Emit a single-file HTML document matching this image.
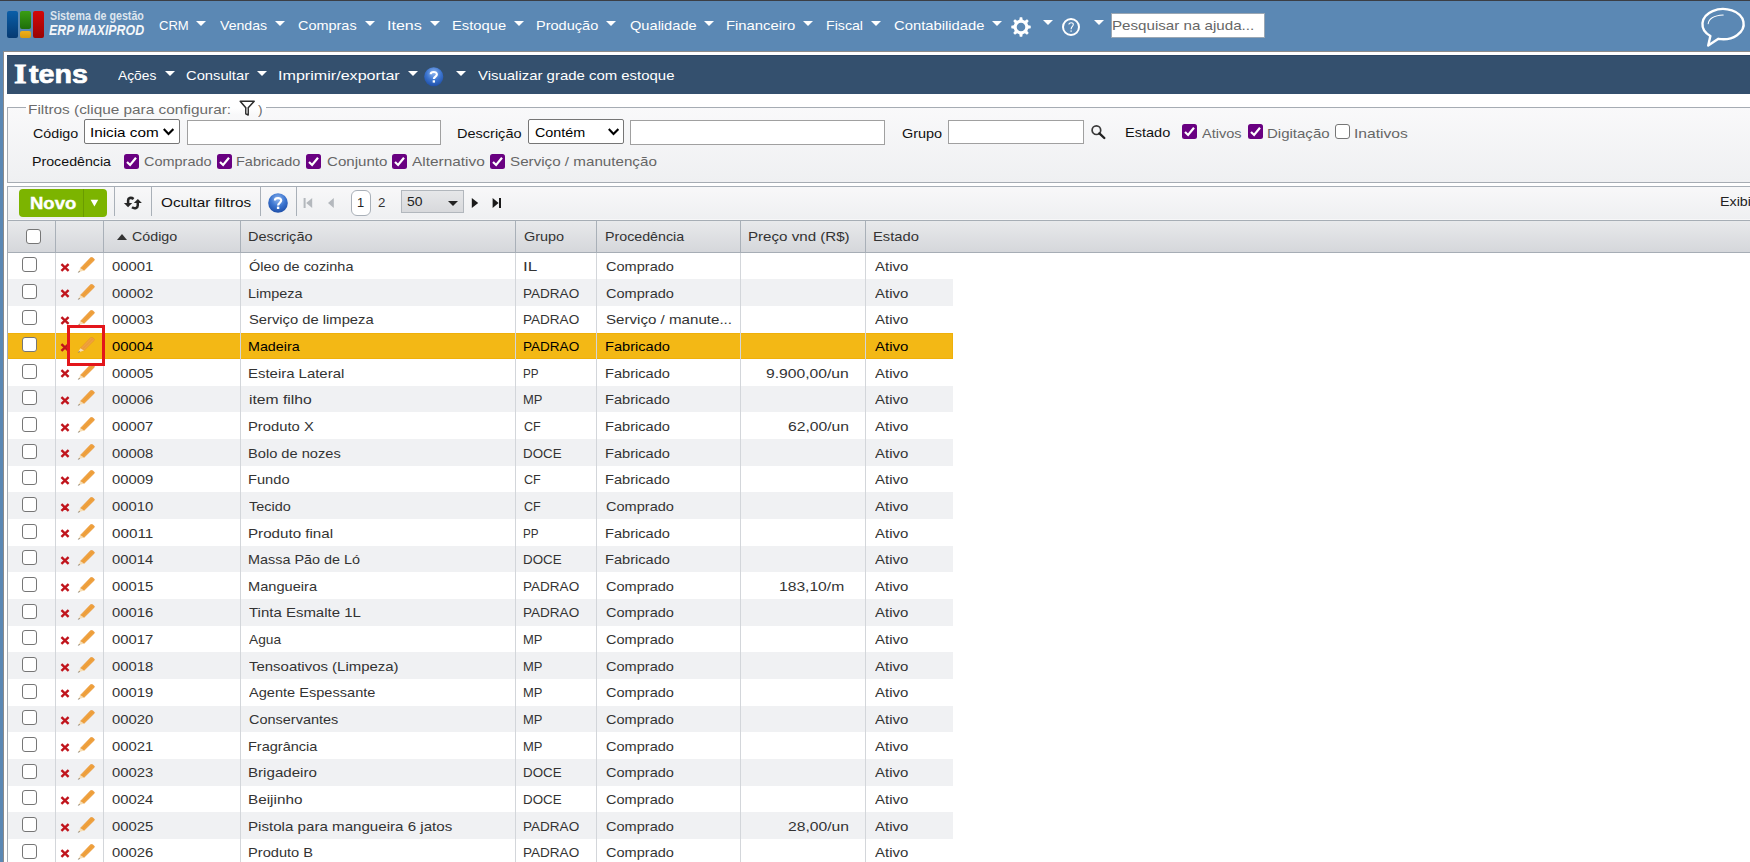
<!DOCTYPE html>
<html><head><meta charset="utf-8"><title>Itens</title>
<style>
html,body{margin:0;padding:0}
body{width:1750px;height:862px;overflow:hidden;position:relative;background:#fff;font-family:"Liberation Sans",sans-serif}
.t{position:absolute;white-space:nowrap;font-family:"Liberation Sans",sans-serif;transform-origin:0 0}
</style></head><body>
<div style="position:absolute;left:0px;top:0px;width:1750px;height:1px;background:#3b3e44"></div><div style="position:absolute;left:0px;top:1px;width:1750px;height:861px;background:#5b88b4"></div><div style="position:absolute;left:3px;top:51px;width:1747px;height:811px;background:#fff;border-left:1px solid #8b8b8b;border-top:1px solid #8b8b8b;box-sizing:border-box"></div><div style="position:absolute;left:7px;top:55px;width:1743px;height:39px;background:#34506e;border-top:1px solid #2b4563;box-sizing:border-box"></div><div style="position:absolute;left:7px;top:11px;width:11px;height:27px;border-radius:2px;background:linear-gradient(#0a5ea8,#063a72)"></div><div style="position:absolute;left:20px;top:11px;width:11px;height:17.5px;border-radius:2px;background:linear-gradient(#3a9e14,#1e6e0a)"></div><div style="position:absolute;left:20px;top:30.5px;width:11px;height:7.5px;border-radius:2px;background:linear-gradient(#f2b01a,#d89a10)"></div><div style="position:absolute;left:33px;top:11px;width:10.5px;height:27px;border-radius:2px;background:linear-gradient(#d40808,#980404)"></div><div style="position:absolute;left:196px;top:20.5px;width:0;height:0;border-left:5.0px solid transparent;border-right:5.0px solid transparent;border-top:5.5px solid #fff"></div><div style="position:absolute;left:275px;top:20.5px;width:0;height:0;border-left:5.0px solid transparent;border-right:5.0px solid transparent;border-top:5.5px solid #fff"></div><div style="position:absolute;left:364.5px;top:20.5px;width:0;height:0;border-left:5.0px solid transparent;border-right:5.0px solid transparent;border-top:5.5px solid #fff"></div><div style="position:absolute;left:429.8px;top:20.5px;width:0;height:0;border-left:5.0px solid transparent;border-right:5.0px solid transparent;border-top:5.5px solid #fff"></div><div style="position:absolute;left:514px;top:20.5px;width:0;height:0;border-left:5.0px solid transparent;border-right:5.0px solid transparent;border-top:5.5px solid #fff"></div><div style="position:absolute;left:606px;top:20.5px;width:0;height:0;border-left:5.0px solid transparent;border-right:5.0px solid transparent;border-top:5.5px solid #fff"></div><div style="position:absolute;left:703.8px;top:20.5px;width:0;height:0;border-left:5.0px solid transparent;border-right:5.0px solid transparent;border-top:5.5px solid #fff"></div><div style="position:absolute;left:803.2px;top:20.5px;width:0;height:0;border-left:5.0px solid transparent;border-right:5.0px solid transparent;border-top:5.5px solid #fff"></div><div style="position:absolute;left:871.2px;top:20.5px;width:0;height:0;border-left:5.0px solid transparent;border-right:5.0px solid transparent;border-top:5.5px solid #fff"></div><div style="position:absolute;left:992px;top:20.5px;width:0;height:0;border-left:5.0px solid transparent;border-right:5.0px solid transparent;border-top:5.5px solid #fff"></div><div style="position:absolute;left:1042.9px;top:20.3px;width:0;height:0;border-left:5.0px solid transparent;border-right:5.0px solid transparent;border-top:5.5px solid #fff"></div><div style="position:absolute;left:1094px;top:20.3px;width:0;height:0;border-left:5.0px solid transparent;border-right:5.0px solid transparent;border-top:5.5px solid #fff"></div><svg style="position:absolute;left:1010px;top:17px" width="22" height="21" viewBox="0 0 22 21"><path fill="#fff" fill-rule="evenodd" d="M9.33,2.79 L9.77,0.28 L12.23,0.28 L12.67,2.79 L14.92,3.72 L17.01,2.26 L18.74,3.99 L17.28,6.08 L18.21,8.33 L20.72,8.77 L20.72,11.23 L18.21,11.67 L17.28,13.92 L18.74,16.01 L17.01,17.74 L14.92,16.28 L12.67,17.21 L12.23,19.72 L9.77,19.72 L9.33,17.21 L7.08,16.28 L4.99,17.74 L3.26,16.01 L4.72,13.92 L3.79,11.67 L1.28,11.23 L1.28,8.77 L3.79,8.33 L4.72,6.08 L3.26,3.99 L4.99,2.26 L7.08,3.72Z M11,5.7 A4.3,4.3 0 1 0 11,14.3 A4.3,4.3 0 1 0 11,5.7Z"/></svg><svg style="position:absolute;left:1061px;top:17px" width="21" height="20" viewBox="0 0 21 20"><circle cx="10" cy="10" r="8" fill="none" stroke="#fff" stroke-width="2"/><path d="M7.9,7.4 C7.9,5.3 12.3,5.2 12.3,7.6 C12.3,9.4 10.1,9.5 10.1,12.2" fill="none" stroke="#fff" stroke-width="1.1"/><rect x="9.5" y="13.4" width="1.2" height="1.4" fill="#fff"/></svg><div style="position:absolute;left:1111px;top:13px;width:154px;height:25px;background:#fff;border:1px solid #9aa7b4;box-sizing:border-box"></div><svg style="position:absolute;left:1698px;top:5px" width="50" height="44" viewBox="0 0 50 44"><path d="M20.42,33.81 A20.6,15.1 0 1 0 12.37,31.00 L10.2,40.6 Z" fill="none" stroke="#fff" stroke-width="2.4" stroke-linejoin="round"/><path d="M10.2,18.8 C10.8,13.8 16,10.6 25.2,10" fill="none" stroke="#fff" stroke-width="1.1" stroke-linecap="round"/></svg><div style="position:absolute;left:165px;top:70.5px;width:0;height:0;border-left:5.0px solid transparent;border-right:5.0px solid transparent;border-top:5.5px solid #fff"></div><div style="position:absolute;left:257.2px;top:70.5px;width:0;height:0;border-left:5.0px solid transparent;border-right:5.0px solid transparent;border-top:5.5px solid #fff"></div><div style="position:absolute;left:407.7px;top:70.5px;width:0;height:0;border-left:5.0px solid transparent;border-right:5.0px solid transparent;border-top:5.5px solid #fff"></div><div style="position:absolute;left:455.8px;top:70.5px;width:0;height:0;border-left:5.0px solid transparent;border-right:5.0px solid transparent;border-top:5.5px solid #fff"></div><svg style="position:absolute;left:424px;top:67px" width="19.5" height="19.5" viewBox="0 0 20 20"><defs><radialGradient id="hg424" cx="50%" cy="30%" r="70%"><stop offset="0" stop-color="#8fb6ef"/><stop offset="0.55" stop-color="#3b74cf"/><stop offset="1" stop-color="#1f4fa8"/></radialGradient></defs><circle cx="10" cy="10" r="9.8" fill="url(#hg424)"/><path d="M6.9,7.4 C6.9,4.4 13.2,4.2 13.2,7.6 C13.2,9.8 10.1,9.9 10.1,12.4" fill="none" stroke="#fff" stroke-width="2.2"/><rect x="8.9" y="13.6" width="2.4" height="2.4" fill="#fff"/></svg><div style="position:absolute;left:7px;top:107px;width:1743px;height:76px;box-sizing:border-box;border:1px solid #a6acb3;border-right:none;background:linear-gradient(#f9f9fa,#eff0f2)"></div><div style="position:absolute;left:26px;top:106px;width:240px;height:3px;background:#fff"></div><div style="position:absolute;left:26px;top:108px;width:239px;height:6px;background:linear-gradient(#fff,#f9f9fa)"></div><svg style="position:absolute;left:238px;top:99px" width="18" height="18" viewBox="0 0 18 18"><path d="M2.2,2.2 L16.2,2.2 L10.2,8.8 L10.2,16 L7.8,14.8 L7.8,8.8 Z" fill="#fff" stroke="#2b2b2b" stroke-width="1.5" stroke-linejoin="round"/><rect x="8.6" y="9.6" width="0.9" height="4.8" fill="#bbb"/></svg><div style="position:absolute;left:84px;top:119px;width:96px;height:25px;background:#fff;border:1px solid #767676;border-radius:2px;box-sizing:border-box"></div><svg style="position:absolute;left:163.2px;top:128px" width="11" height="8" viewBox="0 0 11 8"><path d="M0.8,1.1 L5.5,6 L10.4,1.1" fill="none" stroke="#000" stroke-width="2.1"/></svg><div style="position:absolute;left:187px;top:120px;width:254px;height:25px;background:#fff;border:1px solid #a0a0a0;box-sizing:border-box"></div><div style="position:absolute;left:528px;top:119px;width:96px;height:25px;background:#fff;border:1px solid #767676;border-radius:2px;box-sizing:border-box"></div><svg style="position:absolute;left:607.6px;top:128px" width="11" height="8" viewBox="0 0 11 8"><path d="M0.8,1.1 L5.5,6 L10.4,1.1" fill="none" stroke="#000" stroke-width="2.1"/></svg><div style="position:absolute;left:630px;top:120px;width:255px;height:25px;background:#fff;border:1px solid #a0a0a0;box-sizing:border-box"></div><div style="position:absolute;left:948px;top:120px;width:136px;height:24px;background:#fff;border:1px solid #a0a0a0;box-sizing:border-box"></div><svg style="position:absolute;left:1089px;top:123px" width="18" height="18" viewBox="0 0 18 18"><circle cx="7.4" cy="7.2" r="4.3" fill="none" stroke="#3a3a3a" stroke-width="1.7"/><path d="M10.4,10.4 L15.3,15" stroke="#222" stroke-width="2.4" stroke-linecap="round"/></svg><svg style="position:absolute;left:1182px;top:124px" width="15" height="15" viewBox="0 0 15 15"><rect x="0" y="0" width="15" height="15" rx="2.5" fill="#690081"/><path d="M3,8 L6.1,11 L12,3.8" fill="none" stroke="#fff" stroke-width="2.2"/></svg><svg style="position:absolute;left:1247.7px;top:124px" width="15" height="15" viewBox="0 0 15 15"><rect x="0" y="0" width="15" height="15" rx="2.5" fill="#690081"/><path d="M3,8 L6.1,11 L12,3.8" fill="none" stroke="#fff" stroke-width="2.2"/></svg><div style="position:absolute;left:1334.6px;top:124px;width:15px;height:15px;box-sizing:border-box;border:1px solid #767676;border-radius:3px;background:#fff"></div><svg style="position:absolute;left:123.8px;top:153.8px" width="15" height="15" viewBox="0 0 15 15"><rect x="0" y="0" width="15" height="15" rx="2.5" fill="#690081"/><path d="M3,8 L6.1,11 L12,3.8" fill="none" stroke="#fff" stroke-width="2.2"/></svg><svg style="position:absolute;left:217px;top:153.8px" width="15" height="15" viewBox="0 0 15 15"><rect x="0" y="0" width="15" height="15" rx="2.5" fill="#690081"/><path d="M3,8 L6.1,11 L12,3.8" fill="none" stroke="#fff" stroke-width="2.2"/></svg><svg style="position:absolute;left:306px;top:153.8px" width="15" height="15" viewBox="0 0 15 15"><rect x="0" y="0" width="15" height="15" rx="2.5" fill="#690081"/><path d="M3,8 L6.1,11 L12,3.8" fill="none" stroke="#fff" stroke-width="2.2"/></svg><svg style="position:absolute;left:391.9px;top:153.8px" width="15" height="15" viewBox="0 0 15 15"><rect x="0" y="0" width="15" height="15" rx="2.5" fill="#690081"/><path d="M3,8 L6.1,11 L12,3.8" fill="none" stroke="#fff" stroke-width="2.2"/></svg><svg style="position:absolute;left:490px;top:153.8px" width="15" height="15" viewBox="0 0 15 15"><rect x="0" y="0" width="15" height="15" rx="2.5" fill="#690081"/><path d="M3,8 L6.1,11 L12,3.8" fill="none" stroke="#fff" stroke-width="2.2"/></svg><div style="position:absolute;left:7px;top:186px;width:1743px;height:35px;box-sizing:border-box;border-top:1px solid #a8afb7;border-left:1px solid #a8afb7;background:linear-gradient(#f8f8f9,#eeeff1)"></div><div style="position:absolute;left:8px;top:219px;width:1742px;height:1px;background:#f7f7f8"></div><div style="position:absolute;left:19px;top:189px;width:88px;height:27.5px;background:#7cb400;border-radius:4px"></div><div style="position:absolute;left:82.5px;top:189px;width:1px;height:27.5px;background:#6a9c00"></div><svg style="position:absolute;left:90px;top:199px" width="9" height="9" viewBox="0 0 9 9"><path d="M0.6,0.8 L8.2,0.8 L4.4,7.6Z" fill="#fff"/></svg><div style="position:absolute;left:114px;top:187px;width:1.2px;height:29px;background:#a9b0b8"></div><div style="position:absolute;left:151px;top:187px;width:1.2px;height:29px;background:#a9b0b8"></div><div style="position:absolute;left:260px;top:187px;width:1.2px;height:29px;background:#a9b0b8"></div><div style="position:absolute;left:296px;top:187px;width:1.2px;height:29px;background:#a9b0b8"></div><svg style="position:absolute;left:122px;top:195px" width="22" height="16" viewBox="0 0 22 16"><path d="M11.6,3.9 C10.2,2.8 8.6,2.8 7.7,3 C6.7,3.3 6.1,4.1 6.1,5.3 L6.1,9" fill="none" stroke="#262626" stroke-width="2.5"/><path d="M1.9,8 L10.2,8 L6.05,12.3Z" fill="#262626"/><path d="M10,12.3 C11.4,13.3 13,13.3 14,13 C15.1,12.6 15.75,11.7 15.75,10.5 L15.75,7" fill="none" stroke="#262626" stroke-width="2.5"/><path d="M11.8,8 L19.9,8 L15.85,3.9Z" fill="#262626"/></svg><svg style="position:absolute;left:268px;top:193px" width="20" height="20" viewBox="0 0 20 20"><defs><radialGradient id="hg268" cx="50%" cy="30%" r="70%"><stop offset="0" stop-color="#8fb6ef"/><stop offset="0.55" stop-color="#3b74cf"/><stop offset="1" stop-color="#1f4fa8"/></radialGradient></defs><circle cx="10" cy="10" r="9.8" fill="url(#hg268)"/><path d="M6.9,7.4 C6.9,4.4 13.2,4.2 13.2,7.6 C13.2,9.8 10.1,9.9 10.1,12.4" fill="none" stroke="#fff" stroke-width="2.2"/><rect x="8.9" y="13.6" width="2.4" height="2.4" fill="#fff"/></svg><svg style="position:absolute;left:300px;top:196px" width="210" height="14" viewBox="0 0 210 14"><rect x="3.6" y="2" width="2" height="10" fill="#b4b8bd"/><path d="M12.2,2 L6.2,7 L12.2,12Z" fill="#b4b8bd"/><path d="M33.8,2 L28,7 L33.8,12Z" fill="#b4b8bd"/><path d="M171.8,2 L178.2,7 L171.8,12Z" fill="#1a1a1a"/><path d="M192.6,2 L198.6,7 L192.6,12Z" fill="#1a1a1a"/><rect x="199" y="2" width="2" height="10" fill="#1a1a1a"/></svg><div style="position:absolute;left:351px;top:189.5px;width:20px;height:26px;background:#fff;border:1px solid #a9b0b8;border-radius:6px;box-sizing:border-box"></div><div style="position:absolute;left:401px;top:189.5px;width:63px;height:23px;background:linear-gradient(#e6e7e9,#d8d9dc);border:1px solid #b2b7bd;box-sizing:border-box"></div><div style="position:absolute;left:448px;top:201px;width:0;height:0;border-left:5.0px solid transparent;border-right:5.0px solid transparent;border-top:5px solid #222"></div><div style="position:absolute;left:7px;top:220px;width:1743px;height:33px;box-sizing:border-box;border-top:1px solid #a6adb5;border-bottom:1px solid #a6adb5;border-left:1px solid #a6adb5;background:linear-gradient(#e8e9eb,#d5d7db)"></div><div style="position:absolute;left:55px;top:221px;width:1px;height:31px;background:#a9b0b8"></div><div style="position:absolute;left:103px;top:221px;width:1px;height:31px;background:#a9b0b8"></div><div style="position:absolute;left:240px;top:221px;width:1px;height:31px;background:#a9b0b8"></div><div style="position:absolute;left:515px;top:221px;width:1px;height:31px;background:#a9b0b8"></div><div style="position:absolute;left:596px;top:221px;width:1px;height:31px;background:#a9b0b8"></div><div style="position:absolute;left:740px;top:221px;width:1px;height:31px;background:#a9b0b8"></div><div style="position:absolute;left:865px;top:221px;width:1px;height:31px;background:#a9b0b8"></div><div style="position:absolute;left:26.4px;top:229px;width:14.5px;height:14.5px;box-sizing:border-box;border:1px solid #767676;border-radius:3px;background:#fff"></div><div style="position:absolute;left:116.8px;top:234.2px;width:0;height:0;border-left:5.2px solid transparent;border-right:5.2px solid transparent;border-bottom:6px solid #333"></div><div style="position:absolute;left:7px;top:252px;width:1px;height:610px;background:#a6adb5"></div><div style="position:absolute;left:8px;top:278.99966666666666px;width:945px;height:26.666666666666668px;background:#f0f1f3"></div><div style="position:absolute;left:8px;top:333px;width:945px;height:26px;background:#f3b815;border:1px solid #efb00a;border-left:none;box-sizing:border-box"></div><div style="position:absolute;left:8px;top:385.66633333333334px;width:945px;height:26.666666666666668px;background:#f0f1f3"></div><div style="position:absolute;left:8px;top:438.9996666666667px;width:945px;height:26.666666666666668px;background:#f0f1f3"></div><div style="position:absolute;left:8px;top:492.33299999999997px;width:945px;height:26.666666666666668px;background:#f0f1f3"></div><div style="position:absolute;left:8px;top:545.6663333333333px;width:945px;height:26.666666666666668px;background:#f0f1f3"></div><div style="position:absolute;left:8px;top:598.9996666666667px;width:945px;height:26.666666666666668px;background:#f0f1f3"></div><div style="position:absolute;left:8px;top:652.333px;width:945px;height:26.666666666666668px;background:#f0f1f3"></div><div style="position:absolute;left:8px;top:705.6663333333333px;width:945px;height:26.666666666666668px;background:#f0f1f3"></div><div style="position:absolute;left:8px;top:758.9996666666667px;width:945px;height:26.666666666666668px;background:#f0f1f3"></div><div style="position:absolute;left:8px;top:812.333px;width:945px;height:26.666666666666668px;background:#f0f1f3"></div><div style="position:absolute;left:55px;top:252.5px;width:1px;height:610px;background:#d3d6da"></div><div style="position:absolute;left:103px;top:252.5px;width:1px;height:610px;background:#d3d6da"></div><div style="position:absolute;left:240px;top:252.5px;width:1px;height:610px;background:#d3d6da"></div><div style="position:absolute;left:515px;top:252.5px;width:1px;height:610px;background:#d3d6da"></div><div style="position:absolute;left:596px;top:252.5px;width:1px;height:610px;background:#d3d6da"></div><div style="position:absolute;left:740px;top:252.5px;width:1px;height:610px;background:#d3d6da"></div><div style="position:absolute;left:865px;top:252.5px;width:1px;height:610px;background:#d3d6da"></div><div style="position:absolute;left:22.4px;top:257.033px;width:15px;height:15px;box-sizing:border-box;border:1px solid #767676;border-radius:3px;background:#fff"></div><svg style="position:absolute;left:60px;top:262.633px" width="10" height="9" viewBox="0 0 10 9"><path d="M1.4,1.2 L8.6,7.8 M8.6,1.2 L1.4,7.8" stroke="#c0141c" stroke-width="2.4"/></svg><svg style="position:absolute;left:76.5px;top:257.133px" width="19" height="17" viewBox="0 0 19 17"><path d="M13.9,0.3 C14.8,-0.2 16.5,1 17.3,2.2 C17.6,2.7 17.4,3.2 17.1,3.5 L7.0,13.5 L3.4,11.2 Z" fill="#f0a23e" stroke="#e38d2c" stroke-width="0.5"/><path d="M5.2,12.3 L15.6,1.9" stroke="#e08a2a" stroke-width="0.6" opacity="0.6"/><path d="M3.4,11.2 L7.0,13.5 L0.9,15.4 Z" fill="#f7ddb2"/><path d="M0.7,15.6 L2.2,14.3 L2.9,15.0 Z" fill="#3a3a3a"/></svg><div style="position:absolute;left:22.4px;top:283.69966666666664px;width:15px;height:15px;box-sizing:border-box;border:1px solid #767676;border-radius:3px;background:#fff"></div><svg style="position:absolute;left:60px;top:289.29966666666667px" width="10" height="9" viewBox="0 0 10 9"><path d="M1.4,1.2 L8.6,7.8 M8.6,1.2 L1.4,7.8" stroke="#c0141c" stroke-width="2.4"/></svg><svg style="position:absolute;left:76.5px;top:283.79966666666667px" width="19" height="17" viewBox="0 0 19 17"><path d="M13.9,0.3 C14.8,-0.2 16.5,1 17.3,2.2 C17.6,2.7 17.4,3.2 17.1,3.5 L7.0,13.5 L3.4,11.2 Z" fill="#f0a23e" stroke="#e38d2c" stroke-width="0.5"/><path d="M5.2,12.3 L15.6,1.9" stroke="#e08a2a" stroke-width="0.6" opacity="0.6"/><path d="M3.4,11.2 L7.0,13.5 L0.9,15.4 Z" fill="#f7ddb2"/><path d="M0.7,15.6 L2.2,14.3 L2.9,15.0 Z" fill="#3a3a3a"/></svg><div style="position:absolute;left:22.4px;top:310.36633333333333px;width:15px;height:15px;box-sizing:border-box;border:1px solid #767676;border-radius:3px;background:#fff"></div><svg style="position:absolute;left:60px;top:315.96633333333335px" width="10" height="9" viewBox="0 0 10 9"><path d="M1.4,1.2 L8.6,7.8 M8.6,1.2 L1.4,7.8" stroke="#c0141c" stroke-width="2.4"/></svg><svg style="position:absolute;left:76.5px;top:310.46633333333335px" width="19" height="17" viewBox="0 0 19 17"><path d="M13.9,0.3 C14.8,-0.2 16.5,1 17.3,2.2 C17.6,2.7 17.4,3.2 17.1,3.5 L7.0,13.5 L3.4,11.2 Z" fill="#f0a23e" stroke="#e38d2c" stroke-width="0.5"/><path d="M5.2,12.3 L15.6,1.9" stroke="#e08a2a" stroke-width="0.6" opacity="0.6"/><path d="M3.4,11.2 L7.0,13.5 L0.9,15.4 Z" fill="#f7ddb2"/><path d="M0.7,15.6 L2.2,14.3 L2.9,15.0 Z" fill="#3a3a3a"/></svg><div style="position:absolute;left:22.4px;top:337.03299999999996px;width:15px;height:15px;box-sizing:border-box;border:1px solid #767676;border-radius:3px;background:#fff"></div><svg style="position:absolute;left:60px;top:342.633px" width="10" height="9" viewBox="0 0 10 9"><path d="M1.4,1.2 L8.6,7.8 M8.6,1.2 L1.4,7.8" stroke="#c0141c" stroke-width="2.4"/></svg><svg style="position:absolute;left:76.5px;top:337.133px" width="19" height="17" viewBox="0 0 19 17"><path d="M13.9,0.3 C14.8,-0.2 16.5,1 17.3,2.2 C17.6,2.7 17.4,3.2 17.1,3.5 L7.0,13.5 L3.4,11.2 Z" fill="#f0a23e" stroke="#e38d2c" stroke-width="0.5"/><path d="M5.2,12.3 L15.6,1.9" stroke="#e08a2a" stroke-width="0.6" opacity="0.6"/><path d="M3.4,11.2 L7.0,13.5 L0.9,15.4 Z" fill="#f7ddb2"/><path d="M0.7,15.6 L2.2,14.3 L2.9,15.0 Z" fill="#3a3a3a"/></svg><div style="position:absolute;left:22.4px;top:363.69966666666664px;width:15px;height:15px;box-sizing:border-box;border:1px solid #767676;border-radius:3px;background:#fff"></div><svg style="position:absolute;left:60px;top:369.29966666666667px" width="10" height="9" viewBox="0 0 10 9"><path d="M1.4,1.2 L8.6,7.8 M8.6,1.2 L1.4,7.8" stroke="#c0141c" stroke-width="2.4"/></svg><svg style="position:absolute;left:76.5px;top:363.79966666666667px" width="19" height="17" viewBox="0 0 19 17"><path d="M13.9,0.3 C14.8,-0.2 16.5,1 17.3,2.2 C17.6,2.7 17.4,3.2 17.1,3.5 L7.0,13.5 L3.4,11.2 Z" fill="#f0a23e" stroke="#e38d2c" stroke-width="0.5"/><path d="M5.2,12.3 L15.6,1.9" stroke="#e08a2a" stroke-width="0.6" opacity="0.6"/><path d="M3.4,11.2 L7.0,13.5 L0.9,15.4 Z" fill="#f7ddb2"/><path d="M0.7,15.6 L2.2,14.3 L2.9,15.0 Z" fill="#3a3a3a"/></svg><div style="position:absolute;left:22.4px;top:390.36633333333333px;width:15px;height:15px;box-sizing:border-box;border:1px solid #767676;border-radius:3px;background:#fff"></div><svg style="position:absolute;left:60px;top:395.96633333333335px" width="10" height="9" viewBox="0 0 10 9"><path d="M1.4,1.2 L8.6,7.8 M8.6,1.2 L1.4,7.8" stroke="#c0141c" stroke-width="2.4"/></svg><svg style="position:absolute;left:76.5px;top:390.46633333333335px" width="19" height="17" viewBox="0 0 19 17"><path d="M13.9,0.3 C14.8,-0.2 16.5,1 17.3,2.2 C17.6,2.7 17.4,3.2 17.1,3.5 L7.0,13.5 L3.4,11.2 Z" fill="#f0a23e" stroke="#e38d2c" stroke-width="0.5"/><path d="M5.2,12.3 L15.6,1.9" stroke="#e08a2a" stroke-width="0.6" opacity="0.6"/><path d="M3.4,11.2 L7.0,13.5 L0.9,15.4 Z" fill="#f7ddb2"/><path d="M0.7,15.6 L2.2,14.3 L2.9,15.0 Z" fill="#3a3a3a"/></svg><div style="position:absolute;left:22.4px;top:417.03299999999996px;width:15px;height:15px;box-sizing:border-box;border:1px solid #767676;border-radius:3px;background:#fff"></div><svg style="position:absolute;left:60px;top:422.633px" width="10" height="9" viewBox="0 0 10 9"><path d="M1.4,1.2 L8.6,7.8 M8.6,1.2 L1.4,7.8" stroke="#c0141c" stroke-width="2.4"/></svg><svg style="position:absolute;left:76.5px;top:417.133px" width="19" height="17" viewBox="0 0 19 17"><path d="M13.9,0.3 C14.8,-0.2 16.5,1 17.3,2.2 C17.6,2.7 17.4,3.2 17.1,3.5 L7.0,13.5 L3.4,11.2 Z" fill="#f0a23e" stroke="#e38d2c" stroke-width="0.5"/><path d="M5.2,12.3 L15.6,1.9" stroke="#e08a2a" stroke-width="0.6" opacity="0.6"/><path d="M3.4,11.2 L7.0,13.5 L0.9,15.4 Z" fill="#f7ddb2"/><path d="M0.7,15.6 L2.2,14.3 L2.9,15.0 Z" fill="#3a3a3a"/></svg><div style="position:absolute;left:22.4px;top:443.6996666666667px;width:15px;height:15px;box-sizing:border-box;border:1px solid #767676;border-radius:3px;background:#fff"></div><svg style="position:absolute;left:60px;top:449.2996666666667px" width="10" height="9" viewBox="0 0 10 9"><path d="M1.4,1.2 L8.6,7.8 M8.6,1.2 L1.4,7.8" stroke="#c0141c" stroke-width="2.4"/></svg><svg style="position:absolute;left:76.5px;top:443.7996666666667px" width="19" height="17" viewBox="0 0 19 17"><path d="M13.9,0.3 C14.8,-0.2 16.5,1 17.3,2.2 C17.6,2.7 17.4,3.2 17.1,3.5 L7.0,13.5 L3.4,11.2 Z" fill="#f0a23e" stroke="#e38d2c" stroke-width="0.5"/><path d="M5.2,12.3 L15.6,1.9" stroke="#e08a2a" stroke-width="0.6" opacity="0.6"/><path d="M3.4,11.2 L7.0,13.5 L0.9,15.4 Z" fill="#f7ddb2"/><path d="M0.7,15.6 L2.2,14.3 L2.9,15.0 Z" fill="#3a3a3a"/></svg><div style="position:absolute;left:22.4px;top:470.36633333333333px;width:15px;height:15px;box-sizing:border-box;border:1px solid #767676;border-radius:3px;background:#fff"></div><svg style="position:absolute;left:60px;top:475.96633333333335px" width="10" height="9" viewBox="0 0 10 9"><path d="M1.4,1.2 L8.6,7.8 M8.6,1.2 L1.4,7.8" stroke="#c0141c" stroke-width="2.4"/></svg><svg style="position:absolute;left:76.5px;top:470.46633333333335px" width="19" height="17" viewBox="0 0 19 17"><path d="M13.9,0.3 C14.8,-0.2 16.5,1 17.3,2.2 C17.6,2.7 17.4,3.2 17.1,3.5 L7.0,13.5 L3.4,11.2 Z" fill="#f0a23e" stroke="#e38d2c" stroke-width="0.5"/><path d="M5.2,12.3 L15.6,1.9" stroke="#e08a2a" stroke-width="0.6" opacity="0.6"/><path d="M3.4,11.2 L7.0,13.5 L0.9,15.4 Z" fill="#f7ddb2"/><path d="M0.7,15.6 L2.2,14.3 L2.9,15.0 Z" fill="#3a3a3a"/></svg><div style="position:absolute;left:22.4px;top:497.03299999999996px;width:15px;height:15px;box-sizing:border-box;border:1px solid #767676;border-radius:3px;background:#fff"></div><svg style="position:absolute;left:60px;top:502.633px" width="10" height="9" viewBox="0 0 10 9"><path d="M1.4,1.2 L8.6,7.8 M8.6,1.2 L1.4,7.8" stroke="#c0141c" stroke-width="2.4"/></svg><svg style="position:absolute;left:76.5px;top:497.133px" width="19" height="17" viewBox="0 0 19 17"><path d="M13.9,0.3 C14.8,-0.2 16.5,1 17.3,2.2 C17.6,2.7 17.4,3.2 17.1,3.5 L7.0,13.5 L3.4,11.2 Z" fill="#f0a23e" stroke="#e38d2c" stroke-width="0.5"/><path d="M5.2,12.3 L15.6,1.9" stroke="#e08a2a" stroke-width="0.6" opacity="0.6"/><path d="M3.4,11.2 L7.0,13.5 L0.9,15.4 Z" fill="#f7ddb2"/><path d="M0.7,15.6 L2.2,14.3 L2.9,15.0 Z" fill="#3a3a3a"/></svg><div style="position:absolute;left:22.4px;top:523.6996666666668px;width:15px;height:15px;box-sizing:border-box;border:1px solid #767676;border-radius:3px;background:#fff"></div><svg style="position:absolute;left:60px;top:529.2996666666667px" width="10" height="9" viewBox="0 0 10 9"><path d="M1.4,1.2 L8.6,7.8 M8.6,1.2 L1.4,7.8" stroke="#c0141c" stroke-width="2.4"/></svg><svg style="position:absolute;left:76.5px;top:523.7996666666667px" width="19" height="17" viewBox="0 0 19 17"><path d="M13.9,0.3 C14.8,-0.2 16.5,1 17.3,2.2 C17.6,2.7 17.4,3.2 17.1,3.5 L7.0,13.5 L3.4,11.2 Z" fill="#f0a23e" stroke="#e38d2c" stroke-width="0.5"/><path d="M5.2,12.3 L15.6,1.9" stroke="#e08a2a" stroke-width="0.6" opacity="0.6"/><path d="M3.4,11.2 L7.0,13.5 L0.9,15.4 Z" fill="#f7ddb2"/><path d="M0.7,15.6 L2.2,14.3 L2.9,15.0 Z" fill="#3a3a3a"/></svg><div style="position:absolute;left:22.4px;top:550.3663333333334px;width:15px;height:15px;box-sizing:border-box;border:1px solid #767676;border-radius:3px;background:#fff"></div><svg style="position:absolute;left:60px;top:555.9663333333333px" width="10" height="9" viewBox="0 0 10 9"><path d="M1.4,1.2 L8.6,7.8 M8.6,1.2 L1.4,7.8" stroke="#c0141c" stroke-width="2.4"/></svg><svg style="position:absolute;left:76.5px;top:550.4663333333333px" width="19" height="17" viewBox="0 0 19 17"><path d="M13.9,0.3 C14.8,-0.2 16.5,1 17.3,2.2 C17.6,2.7 17.4,3.2 17.1,3.5 L7.0,13.5 L3.4,11.2 Z" fill="#f0a23e" stroke="#e38d2c" stroke-width="0.5"/><path d="M5.2,12.3 L15.6,1.9" stroke="#e08a2a" stroke-width="0.6" opacity="0.6"/><path d="M3.4,11.2 L7.0,13.5 L0.9,15.4 Z" fill="#f7ddb2"/><path d="M0.7,15.6 L2.2,14.3 L2.9,15.0 Z" fill="#3a3a3a"/></svg><div style="position:absolute;left:22.4px;top:577.033px;width:15px;height:15px;box-sizing:border-box;border:1px solid #767676;border-radius:3px;background:#fff"></div><svg style="position:absolute;left:60px;top:582.6329999999999px" width="10" height="9" viewBox="0 0 10 9"><path d="M1.4,1.2 L8.6,7.8 M8.6,1.2 L1.4,7.8" stroke="#c0141c" stroke-width="2.4"/></svg><svg style="position:absolute;left:76.5px;top:577.1329999999999px" width="19" height="17" viewBox="0 0 19 17"><path d="M13.9,0.3 C14.8,-0.2 16.5,1 17.3,2.2 C17.6,2.7 17.4,3.2 17.1,3.5 L7.0,13.5 L3.4,11.2 Z" fill="#f0a23e" stroke="#e38d2c" stroke-width="0.5"/><path d="M5.2,12.3 L15.6,1.9" stroke="#e08a2a" stroke-width="0.6" opacity="0.6"/><path d="M3.4,11.2 L7.0,13.5 L0.9,15.4 Z" fill="#f7ddb2"/><path d="M0.7,15.6 L2.2,14.3 L2.9,15.0 Z" fill="#3a3a3a"/></svg><div style="position:absolute;left:22.4px;top:603.6996666666668px;width:15px;height:15px;box-sizing:border-box;border:1px solid #767676;border-radius:3px;background:#fff"></div><svg style="position:absolute;left:60px;top:609.2996666666667px" width="10" height="9" viewBox="0 0 10 9"><path d="M1.4,1.2 L8.6,7.8 M8.6,1.2 L1.4,7.8" stroke="#c0141c" stroke-width="2.4"/></svg><svg style="position:absolute;left:76.5px;top:603.7996666666667px" width="19" height="17" viewBox="0 0 19 17"><path d="M13.9,0.3 C14.8,-0.2 16.5,1 17.3,2.2 C17.6,2.7 17.4,3.2 17.1,3.5 L7.0,13.5 L3.4,11.2 Z" fill="#f0a23e" stroke="#e38d2c" stroke-width="0.5"/><path d="M5.2,12.3 L15.6,1.9" stroke="#e08a2a" stroke-width="0.6" opacity="0.6"/><path d="M3.4,11.2 L7.0,13.5 L0.9,15.4 Z" fill="#f7ddb2"/><path d="M0.7,15.6 L2.2,14.3 L2.9,15.0 Z" fill="#3a3a3a"/></svg><div style="position:absolute;left:22.4px;top:630.3663333333334px;width:15px;height:15px;box-sizing:border-box;border:1px solid #767676;border-radius:3px;background:#fff"></div><svg style="position:absolute;left:60px;top:635.9663333333333px" width="10" height="9" viewBox="0 0 10 9"><path d="M1.4,1.2 L8.6,7.8 M8.6,1.2 L1.4,7.8" stroke="#c0141c" stroke-width="2.4"/></svg><svg style="position:absolute;left:76.5px;top:630.4663333333333px" width="19" height="17" viewBox="0 0 19 17"><path d="M13.9,0.3 C14.8,-0.2 16.5,1 17.3,2.2 C17.6,2.7 17.4,3.2 17.1,3.5 L7.0,13.5 L3.4,11.2 Z" fill="#f0a23e" stroke="#e38d2c" stroke-width="0.5"/><path d="M5.2,12.3 L15.6,1.9" stroke="#e08a2a" stroke-width="0.6" opacity="0.6"/><path d="M3.4,11.2 L7.0,13.5 L0.9,15.4 Z" fill="#f7ddb2"/><path d="M0.7,15.6 L2.2,14.3 L2.9,15.0 Z" fill="#3a3a3a"/></svg><div style="position:absolute;left:22.4px;top:657.033px;width:15px;height:15px;box-sizing:border-box;border:1px solid #767676;border-radius:3px;background:#fff"></div><svg style="position:absolute;left:60px;top:662.6329999999999px" width="10" height="9" viewBox="0 0 10 9"><path d="M1.4,1.2 L8.6,7.8 M8.6,1.2 L1.4,7.8" stroke="#c0141c" stroke-width="2.4"/></svg><svg style="position:absolute;left:76.5px;top:657.1329999999999px" width="19" height="17" viewBox="0 0 19 17"><path d="M13.9,0.3 C14.8,-0.2 16.5,1 17.3,2.2 C17.6,2.7 17.4,3.2 17.1,3.5 L7.0,13.5 L3.4,11.2 Z" fill="#f0a23e" stroke="#e38d2c" stroke-width="0.5"/><path d="M5.2,12.3 L15.6,1.9" stroke="#e08a2a" stroke-width="0.6" opacity="0.6"/><path d="M3.4,11.2 L7.0,13.5 L0.9,15.4 Z" fill="#f7ddb2"/><path d="M0.7,15.6 L2.2,14.3 L2.9,15.0 Z" fill="#3a3a3a"/></svg><div style="position:absolute;left:22.4px;top:683.6996666666668px;width:15px;height:15px;box-sizing:border-box;border:1px solid #767676;border-radius:3px;background:#fff"></div><svg style="position:absolute;left:60px;top:689.2996666666667px" width="10" height="9" viewBox="0 0 10 9"><path d="M1.4,1.2 L8.6,7.8 M8.6,1.2 L1.4,7.8" stroke="#c0141c" stroke-width="2.4"/></svg><svg style="position:absolute;left:76.5px;top:683.7996666666667px" width="19" height="17" viewBox="0 0 19 17"><path d="M13.9,0.3 C14.8,-0.2 16.5,1 17.3,2.2 C17.6,2.7 17.4,3.2 17.1,3.5 L7.0,13.5 L3.4,11.2 Z" fill="#f0a23e" stroke="#e38d2c" stroke-width="0.5"/><path d="M5.2,12.3 L15.6,1.9" stroke="#e08a2a" stroke-width="0.6" opacity="0.6"/><path d="M3.4,11.2 L7.0,13.5 L0.9,15.4 Z" fill="#f7ddb2"/><path d="M0.7,15.6 L2.2,14.3 L2.9,15.0 Z" fill="#3a3a3a"/></svg><div style="position:absolute;left:22.4px;top:710.3663333333334px;width:15px;height:15px;box-sizing:border-box;border:1px solid #767676;border-radius:3px;background:#fff"></div><svg style="position:absolute;left:60px;top:715.9663333333333px" width="10" height="9" viewBox="0 0 10 9"><path d="M1.4,1.2 L8.6,7.8 M8.6,1.2 L1.4,7.8" stroke="#c0141c" stroke-width="2.4"/></svg><svg style="position:absolute;left:76.5px;top:710.4663333333333px" width="19" height="17" viewBox="0 0 19 17"><path d="M13.9,0.3 C14.8,-0.2 16.5,1 17.3,2.2 C17.6,2.7 17.4,3.2 17.1,3.5 L7.0,13.5 L3.4,11.2 Z" fill="#f0a23e" stroke="#e38d2c" stroke-width="0.5"/><path d="M5.2,12.3 L15.6,1.9" stroke="#e08a2a" stroke-width="0.6" opacity="0.6"/><path d="M3.4,11.2 L7.0,13.5 L0.9,15.4 Z" fill="#f7ddb2"/><path d="M0.7,15.6 L2.2,14.3 L2.9,15.0 Z" fill="#3a3a3a"/></svg><div style="position:absolute;left:22.4px;top:737.033px;width:15px;height:15px;box-sizing:border-box;border:1px solid #767676;border-radius:3px;background:#fff"></div><svg style="position:absolute;left:60px;top:742.6329999999999px" width="10" height="9" viewBox="0 0 10 9"><path d="M1.4,1.2 L8.6,7.8 M8.6,1.2 L1.4,7.8" stroke="#c0141c" stroke-width="2.4"/></svg><svg style="position:absolute;left:76.5px;top:737.1329999999999px" width="19" height="17" viewBox="0 0 19 17"><path d="M13.9,0.3 C14.8,-0.2 16.5,1 17.3,2.2 C17.6,2.7 17.4,3.2 17.1,3.5 L7.0,13.5 L3.4,11.2 Z" fill="#f0a23e" stroke="#e38d2c" stroke-width="0.5"/><path d="M5.2,12.3 L15.6,1.9" stroke="#e08a2a" stroke-width="0.6" opacity="0.6"/><path d="M3.4,11.2 L7.0,13.5 L0.9,15.4 Z" fill="#f7ddb2"/><path d="M0.7,15.6 L2.2,14.3 L2.9,15.0 Z" fill="#3a3a3a"/></svg><div style="position:absolute;left:22.4px;top:763.6996666666668px;width:15px;height:15px;box-sizing:border-box;border:1px solid #767676;border-radius:3px;background:#fff"></div><svg style="position:absolute;left:60px;top:769.2996666666667px" width="10" height="9" viewBox="0 0 10 9"><path d="M1.4,1.2 L8.6,7.8 M8.6,1.2 L1.4,7.8" stroke="#c0141c" stroke-width="2.4"/></svg><svg style="position:absolute;left:76.5px;top:763.7996666666667px" width="19" height="17" viewBox="0 0 19 17"><path d="M13.9,0.3 C14.8,-0.2 16.5,1 17.3,2.2 C17.6,2.7 17.4,3.2 17.1,3.5 L7.0,13.5 L3.4,11.2 Z" fill="#f0a23e" stroke="#e38d2c" stroke-width="0.5"/><path d="M5.2,12.3 L15.6,1.9" stroke="#e08a2a" stroke-width="0.6" opacity="0.6"/><path d="M3.4,11.2 L7.0,13.5 L0.9,15.4 Z" fill="#f7ddb2"/><path d="M0.7,15.6 L2.2,14.3 L2.9,15.0 Z" fill="#3a3a3a"/></svg><div style="position:absolute;left:22.4px;top:790.3663333333334px;width:15px;height:15px;box-sizing:border-box;border:1px solid #767676;border-radius:3px;background:#fff"></div><svg style="position:absolute;left:60px;top:795.9663333333333px" width="10" height="9" viewBox="0 0 10 9"><path d="M1.4,1.2 L8.6,7.8 M8.6,1.2 L1.4,7.8" stroke="#c0141c" stroke-width="2.4"/></svg><svg style="position:absolute;left:76.5px;top:790.4663333333333px" width="19" height="17" viewBox="0 0 19 17"><path d="M13.9,0.3 C14.8,-0.2 16.5,1 17.3,2.2 C17.6,2.7 17.4,3.2 17.1,3.5 L7.0,13.5 L3.4,11.2 Z" fill="#f0a23e" stroke="#e38d2c" stroke-width="0.5"/><path d="M5.2,12.3 L15.6,1.9" stroke="#e08a2a" stroke-width="0.6" opacity="0.6"/><path d="M3.4,11.2 L7.0,13.5 L0.9,15.4 Z" fill="#f7ddb2"/><path d="M0.7,15.6 L2.2,14.3 L2.9,15.0 Z" fill="#3a3a3a"/></svg><div style="position:absolute;left:22.4px;top:817.033px;width:15px;height:15px;box-sizing:border-box;border:1px solid #767676;border-radius:3px;background:#fff"></div><svg style="position:absolute;left:60px;top:822.6329999999999px" width="10" height="9" viewBox="0 0 10 9"><path d="M1.4,1.2 L8.6,7.8 M8.6,1.2 L1.4,7.8" stroke="#c0141c" stroke-width="2.4"/></svg><svg style="position:absolute;left:76.5px;top:817.1329999999999px" width="19" height="17" viewBox="0 0 19 17"><path d="M13.9,0.3 C14.8,-0.2 16.5,1 17.3,2.2 C17.6,2.7 17.4,3.2 17.1,3.5 L7.0,13.5 L3.4,11.2 Z" fill="#f0a23e" stroke="#e38d2c" stroke-width="0.5"/><path d="M5.2,12.3 L15.6,1.9" stroke="#e08a2a" stroke-width="0.6" opacity="0.6"/><path d="M3.4,11.2 L7.0,13.5 L0.9,15.4 Z" fill="#f7ddb2"/><path d="M0.7,15.6 L2.2,14.3 L2.9,15.0 Z" fill="#3a3a3a"/></svg><div style="position:absolute;left:22.4px;top:843.6996666666668px;width:15px;height:15px;box-sizing:border-box;border:1px solid #767676;border-radius:3px;background:#fff"></div><svg style="position:absolute;left:60px;top:849.2996666666667px" width="10" height="9" viewBox="0 0 10 9"><path d="M1.4,1.2 L8.6,7.8 M8.6,1.2 L1.4,7.8" stroke="#c0141c" stroke-width="2.4"/></svg><svg style="position:absolute;left:76.5px;top:843.7996666666667px" width="19" height="17" viewBox="0 0 19 17"><path d="M13.9,0.3 C14.8,-0.2 16.5,1 17.3,2.2 C17.6,2.7 17.4,3.2 17.1,3.5 L7.0,13.5 L3.4,11.2 Z" fill="#f0a23e" stroke="#e38d2c" stroke-width="0.5"/><path d="M5.2,12.3 L15.6,1.9" stroke="#e08a2a" stroke-width="0.6" opacity="0.6"/><path d="M3.4,11.2 L7.0,13.5 L0.9,15.4 Z" fill="#f7ddb2"/><path d="M0.7,15.6 L2.2,14.3 L2.9,15.0 Z" fill="#3a3a3a"/></svg><div style="position:absolute;left:67px;top:325px;width:38px;height:41px;border:3.5px solid #e3161b;box-sizing:border-box"></div>
<div class="t" style="left:49.80px;top:8.66px;font-size:12.2px;line-height:14.03px;color:#dde5ee;font-weight:bold;font-style:normal;transform:scaleX(0.8773);">Sistema de gestão</div><div class="t" style="left:48.80px;top:23.28px;font-size:13.8px;line-height:15.87px;color:#f4f7fa;font-weight:bold;font-style:italic;transform:scaleX(0.8969);">ERP MAXIPROD</div><div class="t" style="left:159.20px;top:17.74px;font-size:13.3px;line-height:15.29px;color:#fff;font-weight:normal;font-style:normal;transform:scaleX(0.9827);">CRM</div><div class="t" style="left:219.50px;top:17.74px;font-size:13.3px;line-height:15.29px;color:#fff;font-weight:normal;font-style:normal;transform:scaleX(1.0623);">Vendas</div><div class="t" style="left:298.00px;top:17.74px;font-size:13.3px;line-height:15.29px;color:#fff;font-weight:normal;font-style:normal;transform:scaleX(1.0867);">Compras</div><div class="t" style="left:386.79px;top:17.74px;font-size:13.3px;line-height:15.29px;color:#fff;font-weight:normal;font-style:normal;transform:scaleX(1.2066);">Itens</div><div class="t" style="left:452.09px;top:17.74px;font-size:13.3px;line-height:15.29px;color:#fff;font-weight:normal;font-style:normal;transform:scaleX(1.1098);">Estoque</div><div class="t" style="left:536.21px;top:17.74px;font-size:13.3px;line-height:15.29px;color:#fff;font-weight:normal;font-style:normal;transform:scaleX(1.0932);">Produção</div><div class="t" style="left:629.80px;top:17.74px;font-size:13.3px;line-height:15.29px;color:#fff;font-weight:normal;font-style:normal;transform:scaleX(1.0992);">Qualidade</div><div class="t" style="left:726.18px;top:17.74px;font-size:13.3px;line-height:15.29px;color:#fff;font-weight:normal;font-style:normal;transform:scaleX(1.1156);">Financeiro</div><div class="t" style="left:825.53px;top:17.74px;font-size:13.3px;line-height:15.29px;color:#fff;font-weight:normal;font-style:normal;transform:scaleX(1.0661);">Fiscal</div><div class="t" style="left:894.20px;top:17.74px;font-size:13.3px;line-height:15.29px;color:#fff;font-weight:normal;font-style:normal;transform:scaleX(1.1121);">Contabilidade</div><div class="t" style="left:1112.16px;top:17.74px;font-size:13.3px;line-height:15.29px;color:#666;font-weight:normal;font-style:normal;transform:scaleX(1.1385);">Pesquisar na ajuda...</div><div class="t" style="font-family:'Liberation Serif',serif;left:14.40px;top:58.06px;font-size:27.5px;line-height:31.62px;color:#fff;font-weight:bold;font-style:normal;transform:scaleX(1.1800);-webkit-text-stroke:0.8px #fff;">I</div><div class="t" style="left:28.60px;top:59.54px;font-size:26px;line-height:29.90px;color:#fff;font-weight:bold;font-style:normal;transform:scaleX(1.1019);-webkit-text-stroke:0.7px #fff;">tens</div><div class="t" style="left:118.30px;top:67.74px;font-size:13.3px;line-height:15.29px;color:#fff;font-weight:normal;font-style:normal;transform:scaleX(1.0373);">Ações</div><div class="t" style="left:186.30px;top:67.74px;font-size:13.3px;line-height:15.29px;color:#fff;font-weight:normal;font-style:normal;transform:scaleX(1.1082);">Consultar</div><div class="t" style="left:277.99px;top:67.74px;font-size:13.3px;line-height:15.29px;color:#fff;font-weight:normal;font-style:normal;transform:scaleX(1.2114);">Imprimir/exportar</div><div class="t" style="left:478.20px;top:67.74px;font-size:13.3px;line-height:15.29px;color:#fff;font-weight:normal;font-style:normal;transform:scaleX(1.1230);">Visualizar grade com estoque</div><div class="t" style="left:28.15px;top:101.74px;font-size:13.3px;line-height:15.29px;color:#6b6b6b;font-weight:normal;font-style:normal;transform:scaleX(1.1545);">Filtros (clique para configurar:</div><div class="t" style="left:257.90px;top:101.74px;font-size:13.3px;line-height:15.29px;color:#6b6b6b;font-weight:normal;font-style:normal;transform:scaleX(1.0250);">)</div><div class="t" style="left:32.80px;top:125.74px;font-size:13.3px;line-height:15.29px;color:#111;font-weight:normal;font-style:normal;transform:scaleX(1.0733);">Código</div><div class="t" style="left:89.75px;top:125.34px;font-size:13.3px;line-height:15.29px;color:#000;font-weight:normal;font-style:normal;transform:scaleX(1.1467);">Inicia com</div><div class="t" style="left:456.91px;top:125.74px;font-size:13.3px;line-height:15.29px;color:#111;font-weight:normal;font-style:normal;transform:scaleX(1.0915);">Descrição</div><div class="t" style="left:534.90px;top:125.34px;font-size:13.3px;line-height:15.29px;color:#000;font-weight:normal;font-style:normal;transform:scaleX(1.0778);">Contém</div><div class="t" style="left:901.90px;top:125.74px;font-size:13.3px;line-height:15.29px;color:#111;font-weight:normal;font-style:normal;transform:scaleX(1.0859);">Grupo</div><div class="t" style="left:1124.91px;top:124.94px;font-size:13.3px;line-height:15.29px;color:#111;font-weight:normal;font-style:normal;transform:scaleX(1.0924);">Estado</div><div class="t" style="left:1202.00px;top:125.54px;font-size:13.3px;line-height:15.29px;color:#666;font-weight:normal;font-style:normal;transform:scaleX(1.0941);">Ativos</div><div class="t" style="left:1266.67px;top:125.54px;font-size:13.3px;line-height:15.29px;color:#666;font-weight:normal;font-style:normal;transform:scaleX(1.1288);">Digitação</div><div class="t" style="left:1353.72px;top:125.54px;font-size:13.3px;line-height:15.29px;color:#666;font-weight:normal;font-style:normal;transform:scaleX(1.1754);">Inativos</div><div class="t" style="left:31.73px;top:153.74px;font-size:13.3px;line-height:15.29px;color:#111;font-weight:normal;font-style:normal;transform:scaleX(1.0690);">Procedência</div><div class="t" style="left:144.30px;top:153.94px;font-size:13.3px;line-height:15.29px;color:#666;font-weight:normal;font-style:normal;transform:scaleX(1.0877);">Comprado</div><div class="t" style="left:236.41px;top:153.94px;font-size:13.3px;line-height:15.29px;color:#666;font-weight:normal;font-style:normal;transform:scaleX(1.0878);">Fabricado</div><div class="t" style="left:326.50px;top:153.94px;font-size:13.3px;line-height:15.29px;color:#666;font-weight:normal;font-style:normal;transform:scaleX(1.1338);">Conjunto</div><div class="t" style="left:411.80px;top:153.94px;font-size:13.3px;line-height:15.29px;color:#666;font-weight:normal;font-style:normal;transform:scaleX(1.1581);">Alternativo</div><div class="t" style="left:510.20px;top:153.94px;font-size:13.3px;line-height:15.29px;color:#666;font-weight:normal;font-style:normal;transform:scaleX(1.1419);">Serviço / manutenção</div><div class="t" style="left:29.68px;top:193.70px;font-size:16.5px;line-height:18.97px;color:#fff;font-weight:bold;font-style:normal;transform:scaleX(1.1202);-webkit-text-stroke:0.4px #fff;">Novo</div><div class="t" style="left:160.70px;top:194.74px;font-size:13.3px;line-height:15.29px;color:#111;font-weight:normal;font-style:normal;transform:scaleX(1.1516);">Ocultar filtros</div><div class="t" style="left:357.23px;top:194.94px;font-size:13.3px;line-height:15.29px;color:#222;font-weight:normal;font-style:normal;transform:scaleX(0.9667);">1</div><div class="t" style="left:378.00px;top:194.94px;font-size:13.3px;line-height:15.29px;color:#333;font-weight:normal;font-style:normal;transform:scaleX(1.0000);">2</div><div class="t" style="left:406.90px;top:193.74px;font-size:13.3px;line-height:15.29px;color:#222;font-weight:normal;font-style:normal;transform:scaleX(1.0490);">50</div><div class="t" style="left:1719.83px;top:193.94px;font-size:13.3px;line-height:15.29px;color:#222;font-weight:normal;font-style:normal;transform:scaleX(1.0730);">Exibi</div><div class="t" style="left:132.00px;top:228.74px;font-size:13.3px;line-height:15.29px;color:#333;font-weight:normal;font-style:normal;transform:scaleX(1.0733);">Código</div><div class="t" style="left:248.21px;top:228.74px;font-size:13.3px;line-height:15.29px;color:#333;font-weight:normal;font-style:normal;transform:scaleX(1.0915);">Descrição</div><div class="t" style="left:524.30px;top:228.74px;font-size:13.3px;line-height:15.29px;color:#333;font-weight:normal;font-style:normal;transform:scaleX(1.0859);">Grupo</div><div class="t" style="left:604.53px;top:228.74px;font-size:13.3px;line-height:15.29px;color:#333;font-weight:normal;font-style:normal;transform:scaleX(1.0704);">Procedência</div><div class="t" style="left:748.06px;top:228.74px;font-size:13.3px;line-height:15.29px;color:#333;font-weight:normal;font-style:normal;transform:scaleX(1.1365);">Preço vnd (R$)</div><div class="t" style="left:873.39px;top:228.74px;font-size:13.3px;line-height:15.29px;color:#333;font-weight:normal;font-style:normal;transform:scaleX(1.1074);">Estado</div><div class="t" style="left:112.00px;top:258.74px;font-size:13.3px;line-height:15.29px;color:#333;font-weight:normal;font-style:normal;transform:scaleX(1.1154);">00001</div><div class="t" style="left:249.30px;top:258.74px;font-size:13.3px;line-height:15.29px;color:#333;font-weight:normal;font-style:normal;transform:scaleX(1.0868);">Óleo de cozinha</div><div class="t" style="left:523.01px;top:258.74px;font-size:13.3px;line-height:15.29px;color:#333;font-weight:normal;font-style:normal;transform:scaleX(1.2894);">IL</div><div class="t" style="left:605.60px;top:258.74px;font-size:13.3px;line-height:15.29px;color:#333;font-weight:normal;font-style:normal;transform:scaleX(1.0942);">Comprado</div><div class="t" style="left:874.50px;top:258.74px;font-size:13.3px;line-height:15.29px;color:#333;font-weight:normal;font-style:normal;transform:scaleX(1.1246);">Ativo</div><div class="t" style="left:112.00px;top:285.74px;font-size:13.3px;line-height:15.29px;color:#333;font-weight:normal;font-style:normal;transform:scaleX(1.1154);">00002</div><div class="t" style="left:248.22px;top:285.74px;font-size:13.3px;line-height:15.29px;color:#333;font-weight:normal;font-style:normal;transform:scaleX(1.0849);">Limpeza</div><div class="t" style="left:523.28px;top:285.74px;font-size:13.3px;line-height:15.29px;color:#333;font-weight:normal;font-style:normal;transform:scaleX(1.0181);">PADRAO</div><div class="t" style="left:605.60px;top:285.74px;font-size:13.3px;line-height:15.29px;color:#333;font-weight:normal;font-style:normal;transform:scaleX(1.0942);">Comprado</div><div class="t" style="left:874.50px;top:285.74px;font-size:13.3px;line-height:15.29px;color:#333;font-weight:normal;font-style:normal;transform:scaleX(1.1246);">Ativo</div><div class="t" style="left:112.00px;top:311.74px;font-size:13.3px;line-height:15.29px;color:#333;font-weight:normal;font-style:normal;transform:scaleX(1.1154);">00003</div><div class="t" style="left:249.30px;top:311.74px;font-size:13.3px;line-height:15.29px;color:#333;font-weight:normal;font-style:normal;transform:scaleX(1.1094);">Serviço de limpeza</div><div class="t" style="left:523.28px;top:311.74px;font-size:13.3px;line-height:15.29px;color:#333;font-weight:normal;font-style:normal;transform:scaleX(1.0181);">PADRAO</div><div class="t" style="left:605.60px;top:311.74px;font-size:13.3px;line-height:15.29px;color:#333;font-weight:normal;font-style:normal;transform:scaleX(1.1365);">Serviço / manute...</div><div class="t" style="left:874.50px;top:311.74px;font-size:13.3px;line-height:15.29px;color:#333;font-weight:normal;font-style:normal;transform:scaleX(1.1246);">Ativo</div><div class="t" style="left:112.00px;top:338.74px;font-size:13.3px;line-height:15.29px;color:#000;font-weight:normal;font-style:normal;transform:scaleX(1.1154);">00004</div><div class="t" style="left:248.23px;top:338.74px;font-size:13.3px;line-height:15.29px;color:#000;font-weight:normal;font-style:normal;transform:scaleX(1.0746);">Madeira</div><div class="t" style="left:523.28px;top:338.74px;font-size:13.3px;line-height:15.29px;color:#000;font-weight:normal;font-style:normal;transform:scaleX(1.0181);">PADRAO</div><div class="t" style="left:604.50px;top:338.74px;font-size:13.3px;line-height:15.29px;color:#000;font-weight:normal;font-style:normal;transform:scaleX(1.0982);">Fabricado</div><div class="t" style="left:874.50px;top:338.74px;font-size:13.3px;line-height:15.29px;color:#000;font-weight:normal;font-style:normal;transform:scaleX(1.1246);">Ativo</div><div class="t" style="left:112.00px;top:365.74px;font-size:13.3px;line-height:15.29px;color:#333;font-weight:normal;font-style:normal;transform:scaleX(1.1154);">00005</div><div class="t" style="left:248.18px;top:365.74px;font-size:13.3px;line-height:15.29px;color:#333;font-weight:normal;font-style:normal;transform:scaleX(1.1229);">Esteira Lateral</div><div class="t" style="left:523.42px;top:365.74px;font-size:13.3px;line-height:15.29px;color:#333;font-weight:normal;font-style:normal;transform:scaleX(0.8774);">PP</div><div class="t" style="left:604.50px;top:365.74px;font-size:13.3px;line-height:15.29px;color:#333;font-weight:normal;font-style:normal;transform:scaleX(1.0982);">Fabricado</div><div class="t" style="left:765.90px;top:365.74px;font-size:13.3px;line-height:15.29px;color:#333;font-weight:normal;font-style:normal;transform:scaleX(1.1783);">9.900,00/un</div><div class="t" style="left:874.50px;top:365.74px;font-size:13.3px;line-height:15.29px;color:#333;font-weight:normal;font-style:normal;transform:scaleX(1.1246);">Ativo</div><div class="t" style="left:112.00px;top:391.74px;font-size:13.3px;line-height:15.29px;color:#333;font-weight:normal;font-style:normal;transform:scaleX(1.1154);">00006</div><div class="t" style="left:249.30px;top:391.74px;font-size:13.3px;line-height:15.29px;color:#333;font-weight:normal;font-style:normal;transform:scaleX(1.1797);">item filho</div><div class="t" style="left:523.32px;top:391.74px;font-size:13.3px;line-height:15.29px;color:#333;font-weight:normal;font-style:normal;transform:scaleX(0.9750);">MP</div><div class="t" style="left:604.50px;top:391.74px;font-size:13.3px;line-height:15.29px;color:#333;font-weight:normal;font-style:normal;transform:scaleX(1.0982);">Fabricado</div><div class="t" style="left:874.50px;top:391.74px;font-size:13.3px;line-height:15.29px;color:#333;font-weight:normal;font-style:normal;transform:scaleX(1.1246);">Ativo</div><div class="t" style="left:112.00px;top:418.74px;font-size:13.3px;line-height:15.29px;color:#333;font-weight:normal;font-style:normal;transform:scaleX(1.1154);">00007</div><div class="t" style="left:248.19px;top:418.74px;font-size:13.3px;line-height:15.29px;color:#333;font-weight:normal;font-style:normal;transform:scaleX(1.1121);">Produto X</div><div class="t" style="left:524.30px;top:418.74px;font-size:13.3px;line-height:15.29px;color:#333;font-weight:normal;font-style:normal;transform:scaleX(0.9430);">CF</div><div class="t" style="left:604.50px;top:418.74px;font-size:13.3px;line-height:15.29px;color:#333;font-weight:normal;font-style:normal;transform:scaleX(1.0982);">Fabricado</div><div class="t" style="left:787.60px;top:418.74px;font-size:13.3px;line-height:15.29px;color:#333;font-weight:normal;font-style:normal;transform:scaleX(1.1798);">62,00/un</div><div class="t" style="left:874.50px;top:418.74px;font-size:13.3px;line-height:15.29px;color:#333;font-weight:normal;font-style:normal;transform:scaleX(1.1246);">Ativo</div><div class="t" style="left:112.00px;top:445.74px;font-size:13.3px;line-height:15.29px;color:#333;font-weight:normal;font-style:normal;transform:scaleX(1.1154);">00008</div><div class="t" style="left:248.20px;top:445.74px;font-size:13.3px;line-height:15.29px;color:#333;font-weight:normal;font-style:normal;transform:scaleX(1.1001);">Bolo de nozes</div><div class="t" style="left:523.30px;top:445.74px;font-size:13.3px;line-height:15.29px;color:#333;font-weight:normal;font-style:normal;transform:scaleX(1.0041);">DOCE</div><div class="t" style="left:604.50px;top:445.74px;font-size:13.3px;line-height:15.29px;color:#333;font-weight:normal;font-style:normal;transform:scaleX(1.0982);">Fabricado</div><div class="t" style="left:874.50px;top:445.74px;font-size:13.3px;line-height:15.29px;color:#333;font-weight:normal;font-style:normal;transform:scaleX(1.1246);">Ativo</div><div class="t" style="left:112.00px;top:471.74px;font-size:13.3px;line-height:15.29px;color:#333;font-weight:normal;font-style:normal;transform:scaleX(1.1154);">00009</div><div class="t" style="left:248.20px;top:471.74px;font-size:13.3px;line-height:15.29px;color:#333;font-weight:normal;font-style:normal;transform:scaleX(1.1017);">Fundo</div><div class="t" style="left:524.30px;top:471.74px;font-size:13.3px;line-height:15.29px;color:#333;font-weight:normal;font-style:normal;transform:scaleX(0.9430);">CF</div><div class="t" style="left:604.50px;top:471.74px;font-size:13.3px;line-height:15.29px;color:#333;font-weight:normal;font-style:normal;transform:scaleX(1.0982);">Fabricado</div><div class="t" style="left:874.50px;top:471.74px;font-size:13.3px;line-height:15.29px;color:#333;font-weight:normal;font-style:normal;transform:scaleX(1.1246);">Ativo</div><div class="t" style="left:112.00px;top:498.74px;font-size:13.3px;line-height:15.29px;color:#333;font-weight:normal;font-style:normal;transform:scaleX(1.1154);">00010</div><div class="t" style="left:249.30px;top:498.74px;font-size:13.3px;line-height:15.29px;color:#333;font-weight:normal;font-style:normal;transform:scaleX(1.0857);">Tecido</div><div class="t" style="left:524.30px;top:498.74px;font-size:13.3px;line-height:15.29px;color:#333;font-weight:normal;font-style:normal;transform:scaleX(0.9430);">CF</div><div class="t" style="left:605.60px;top:498.74px;font-size:13.3px;line-height:15.29px;color:#333;font-weight:normal;font-style:normal;transform:scaleX(1.0942);">Comprado</div><div class="t" style="left:874.50px;top:498.74px;font-size:13.3px;line-height:15.29px;color:#333;font-weight:normal;font-style:normal;transform:scaleX(1.1246);">Ativo</div><div class="t" style="left:112.00px;top:525.74px;font-size:13.3px;line-height:15.29px;color:#333;font-weight:normal;font-style:normal;transform:scaleX(1.1463);">00011</div><div class="t" style="left:248.16px;top:525.74px;font-size:13.3px;line-height:15.29px;color:#333;font-weight:normal;font-style:normal;transform:scaleX(1.1397);">Produto final</div><div class="t" style="left:523.42px;top:525.74px;font-size:13.3px;line-height:15.29px;color:#333;font-weight:normal;font-style:normal;transform:scaleX(0.8774);">PP</div><div class="t" style="left:604.50px;top:525.74px;font-size:13.3px;line-height:15.29px;color:#333;font-weight:normal;font-style:normal;transform:scaleX(1.0982);">Fabricado</div><div class="t" style="left:874.50px;top:525.74px;font-size:13.3px;line-height:15.29px;color:#333;font-weight:normal;font-style:normal;transform:scaleX(1.1246);">Ativo</div><div class="t" style="left:112.00px;top:551.74px;font-size:13.3px;line-height:15.29px;color:#333;font-weight:normal;font-style:normal;transform:scaleX(1.1154);">00014</div><div class="t" style="left:248.22px;top:551.74px;font-size:13.3px;line-height:15.29px;color:#333;font-weight:normal;font-style:normal;transform:scaleX(1.0824);">Massa Pão de Ló</div><div class="t" style="left:523.30px;top:551.74px;font-size:13.3px;line-height:15.29px;color:#333;font-weight:normal;font-style:normal;transform:scaleX(1.0041);">DOCE</div><div class="t" style="left:604.50px;top:551.74px;font-size:13.3px;line-height:15.29px;color:#333;font-weight:normal;font-style:normal;transform:scaleX(1.0982);">Fabricado</div><div class="t" style="left:874.50px;top:551.74px;font-size:13.3px;line-height:15.29px;color:#333;font-weight:normal;font-style:normal;transform:scaleX(1.1246);">Ativo</div><div class="t" style="left:112.00px;top:578.74px;font-size:13.3px;line-height:15.29px;color:#333;font-weight:normal;font-style:normal;transform:scaleX(1.1154);">00015</div><div class="t" style="left:248.20px;top:578.74px;font-size:13.3px;line-height:15.29px;color:#333;font-weight:normal;font-style:normal;transform:scaleX(1.0988);">Mangueira</div><div class="t" style="left:523.28px;top:578.74px;font-size:13.3px;line-height:15.29px;color:#333;font-weight:normal;font-style:normal;transform:scaleX(1.0181);">PADRAO</div><div class="t" style="left:605.60px;top:578.74px;font-size:13.3px;line-height:15.29px;color:#333;font-weight:normal;font-style:normal;transform:scaleX(1.0942);">Comprado</div><div class="t" style="left:778.52px;top:578.74px;font-size:13.3px;line-height:15.29px;color:#333;font-weight:normal;font-style:normal;transform:scaleX(1.1754);">183,10/m</div><div class="t" style="left:874.50px;top:578.74px;font-size:13.3px;line-height:15.29px;color:#333;font-weight:normal;font-style:normal;transform:scaleX(1.1246);">Ativo</div><div class="t" style="left:112.00px;top:604.74px;font-size:13.3px;line-height:15.29px;color:#333;font-weight:normal;font-style:normal;transform:scaleX(1.1154);">00016</div><div class="t" style="left:249.30px;top:604.74px;font-size:13.3px;line-height:15.29px;color:#333;font-weight:normal;font-style:normal;transform:scaleX(1.1266);">Tinta Esmalte 1L</div><div class="t" style="left:523.28px;top:604.74px;font-size:13.3px;line-height:15.29px;color:#333;font-weight:normal;font-style:normal;transform:scaleX(1.0181);">PADRAO</div><div class="t" style="left:605.60px;top:604.74px;font-size:13.3px;line-height:15.29px;color:#333;font-weight:normal;font-style:normal;transform:scaleX(1.0942);">Comprado</div><div class="t" style="left:874.50px;top:604.74px;font-size:13.3px;line-height:15.29px;color:#333;font-weight:normal;font-style:normal;transform:scaleX(1.1246);">Ativo</div><div class="t" style="left:112.00px;top:631.74px;font-size:13.3px;line-height:15.29px;color:#333;font-weight:normal;font-style:normal;transform:scaleX(1.1154);">00017</div><div class="t" style="left:249.30px;top:631.74px;font-size:13.3px;line-height:15.29px;color:#333;font-weight:normal;font-style:normal;transform:scaleX(1.0329);">Agua</div><div class="t" style="left:523.32px;top:631.74px;font-size:13.3px;line-height:15.29px;color:#333;font-weight:normal;font-style:normal;transform:scaleX(0.9750);">MP</div><div class="t" style="left:605.60px;top:631.74px;font-size:13.3px;line-height:15.29px;color:#333;font-weight:normal;font-style:normal;transform:scaleX(1.0942);">Comprado</div><div class="t" style="left:874.50px;top:631.74px;font-size:13.3px;line-height:15.29px;color:#333;font-weight:normal;font-style:normal;transform:scaleX(1.1246);">Ativo</div><div class="t" style="left:112.00px;top:658.74px;font-size:13.3px;line-height:15.29px;color:#333;font-weight:normal;font-style:normal;transform:scaleX(1.1154);">00018</div><div class="t" style="left:249.30px;top:658.74px;font-size:13.3px;line-height:15.29px;color:#333;font-weight:normal;font-style:normal;transform:scaleX(1.1244);">Tensoativos (Limpeza)</div><div class="t" style="left:523.32px;top:658.74px;font-size:13.3px;line-height:15.29px;color:#333;font-weight:normal;font-style:normal;transform:scaleX(0.9750);">MP</div><div class="t" style="left:605.60px;top:658.74px;font-size:13.3px;line-height:15.29px;color:#333;font-weight:normal;font-style:normal;transform:scaleX(1.0942);">Comprado</div><div class="t" style="left:874.50px;top:658.74px;font-size:13.3px;line-height:15.29px;color:#333;font-weight:normal;font-style:normal;transform:scaleX(1.1246);">Ativo</div><div class="t" style="left:112.00px;top:684.74px;font-size:13.3px;line-height:15.29px;color:#333;font-weight:normal;font-style:normal;transform:scaleX(1.1154);">00019</div><div class="t" style="left:249.30px;top:684.74px;font-size:13.3px;line-height:15.29px;color:#333;font-weight:normal;font-style:normal;transform:scaleX(1.0963);">Agente Espessante</div><div class="t" style="left:523.32px;top:684.74px;font-size:13.3px;line-height:15.29px;color:#333;font-weight:normal;font-style:normal;transform:scaleX(0.9750);">MP</div><div class="t" style="left:605.60px;top:684.74px;font-size:13.3px;line-height:15.29px;color:#333;font-weight:normal;font-style:normal;transform:scaleX(1.0942);">Comprado</div><div class="t" style="left:874.50px;top:684.74px;font-size:13.3px;line-height:15.29px;color:#333;font-weight:normal;font-style:normal;transform:scaleX(1.1246);">Ativo</div><div class="t" style="left:112.00px;top:711.74px;font-size:13.3px;line-height:15.29px;color:#333;font-weight:normal;font-style:normal;transform:scaleX(1.1154);">00020</div><div class="t" style="left:249.30px;top:711.74px;font-size:13.3px;line-height:15.29px;color:#333;font-weight:normal;font-style:normal;transform:scaleX(1.0887);">Conservantes</div><div class="t" style="left:523.32px;top:711.74px;font-size:13.3px;line-height:15.29px;color:#333;font-weight:normal;font-style:normal;transform:scaleX(0.9750);">MP</div><div class="t" style="left:605.60px;top:711.74px;font-size:13.3px;line-height:15.29px;color:#333;font-weight:normal;font-style:normal;transform:scaleX(1.0942);">Comprado</div><div class="t" style="left:874.50px;top:711.74px;font-size:13.3px;line-height:15.29px;color:#333;font-weight:normal;font-style:normal;transform:scaleX(1.1246);">Ativo</div><div class="t" style="left:112.00px;top:738.74px;font-size:13.3px;line-height:15.29px;color:#333;font-weight:normal;font-style:normal;transform:scaleX(1.1154);">00021</div><div class="t" style="left:248.21px;top:738.74px;font-size:13.3px;line-height:15.29px;color:#333;font-weight:normal;font-style:normal;transform:scaleX(1.0924);">Fragrância</div><div class="t" style="left:523.32px;top:738.74px;font-size:13.3px;line-height:15.29px;color:#333;font-weight:normal;font-style:normal;transform:scaleX(0.9750);">MP</div><div class="t" style="left:605.60px;top:738.74px;font-size:13.3px;line-height:15.29px;color:#333;font-weight:normal;font-style:normal;transform:scaleX(1.0942);">Comprado</div><div class="t" style="left:874.50px;top:738.74px;font-size:13.3px;line-height:15.29px;color:#333;font-weight:normal;font-style:normal;transform:scaleX(1.1246);">Ativo</div><div class="t" style="left:112.00px;top:764.74px;font-size:13.3px;line-height:15.29px;color:#333;font-weight:normal;font-style:normal;transform:scaleX(1.1154);">00023</div><div class="t" style="left:248.16px;top:764.74px;font-size:13.3px;line-height:15.29px;color:#333;font-weight:normal;font-style:normal;transform:scaleX(1.1366);">Brigadeiro</div><div class="t" style="left:523.30px;top:764.74px;font-size:13.3px;line-height:15.29px;color:#333;font-weight:normal;font-style:normal;transform:scaleX(1.0041);">DOCE</div><div class="t" style="left:605.60px;top:764.74px;font-size:13.3px;line-height:15.29px;color:#333;font-weight:normal;font-style:normal;transform:scaleX(1.0942);">Comprado</div><div class="t" style="left:874.50px;top:764.74px;font-size:13.3px;line-height:15.29px;color:#333;font-weight:normal;font-style:normal;transform:scaleX(1.1246);">Ativo</div><div class="t" style="left:112.00px;top:791.74px;font-size:13.3px;line-height:15.29px;color:#333;font-weight:normal;font-style:normal;transform:scaleX(1.1154);">00024</div><div class="t" style="left:248.15px;top:791.74px;font-size:13.3px;line-height:15.29px;color:#333;font-weight:normal;font-style:normal;transform:scaleX(1.1499);">Beijinho</div><div class="t" style="left:523.30px;top:791.74px;font-size:13.3px;line-height:15.29px;color:#333;font-weight:normal;font-style:normal;transform:scaleX(1.0041);">DOCE</div><div class="t" style="left:605.60px;top:791.74px;font-size:13.3px;line-height:15.29px;color:#333;font-weight:normal;font-style:normal;transform:scaleX(1.0942);">Comprado</div><div class="t" style="left:874.50px;top:791.74px;font-size:13.3px;line-height:15.29px;color:#333;font-weight:normal;font-style:normal;transform:scaleX(1.1246);">Ativo</div><div class="t" style="left:112.00px;top:818.74px;font-size:13.3px;line-height:15.29px;color:#333;font-weight:normal;font-style:normal;transform:scaleX(1.1154);">00025</div><div class="t" style="left:248.16px;top:818.74px;font-size:13.3px;line-height:15.29px;color:#333;font-weight:normal;font-style:normal;transform:scaleX(1.1371);">Pistola para mangueira 6 jatos</div><div class="t" style="left:523.28px;top:818.74px;font-size:13.3px;line-height:15.29px;color:#333;font-weight:normal;font-style:normal;transform:scaleX(1.0181);">PADRAO</div><div class="t" style="left:605.60px;top:818.74px;font-size:13.3px;line-height:15.29px;color:#333;font-weight:normal;font-style:normal;transform:scaleX(1.0942);">Comprado</div><div class="t" style="left:787.60px;top:818.74px;font-size:13.3px;line-height:15.29px;color:#333;font-weight:normal;font-style:normal;transform:scaleX(1.1798);">28,00/un</div><div class="t" style="left:874.50px;top:818.74px;font-size:13.3px;line-height:15.29px;color:#333;font-weight:normal;font-style:normal;transform:scaleX(1.1246);">Ativo</div><div class="t" style="left:112.00px;top:844.74px;font-size:13.3px;line-height:15.29px;color:#333;font-weight:normal;font-style:normal;transform:scaleX(1.1154);">00026</div><div class="t" style="left:248.20px;top:844.74px;font-size:13.3px;line-height:15.29px;color:#333;font-weight:normal;font-style:normal;transform:scaleX(1.1001);">Produto B</div><div class="t" style="left:523.28px;top:844.74px;font-size:13.3px;line-height:15.29px;color:#333;font-weight:normal;font-style:normal;transform:scaleX(1.0181);">PADRAO</div><div class="t" style="left:605.60px;top:844.74px;font-size:13.3px;line-height:15.29px;color:#333;font-weight:normal;font-style:normal;transform:scaleX(1.0942);">Comprado</div><div class="t" style="left:874.50px;top:844.74px;font-size:13.3px;line-height:15.29px;color:#333;font-weight:normal;font-style:normal;transform:scaleX(1.1246);">Ativo</div>
</body></html>
